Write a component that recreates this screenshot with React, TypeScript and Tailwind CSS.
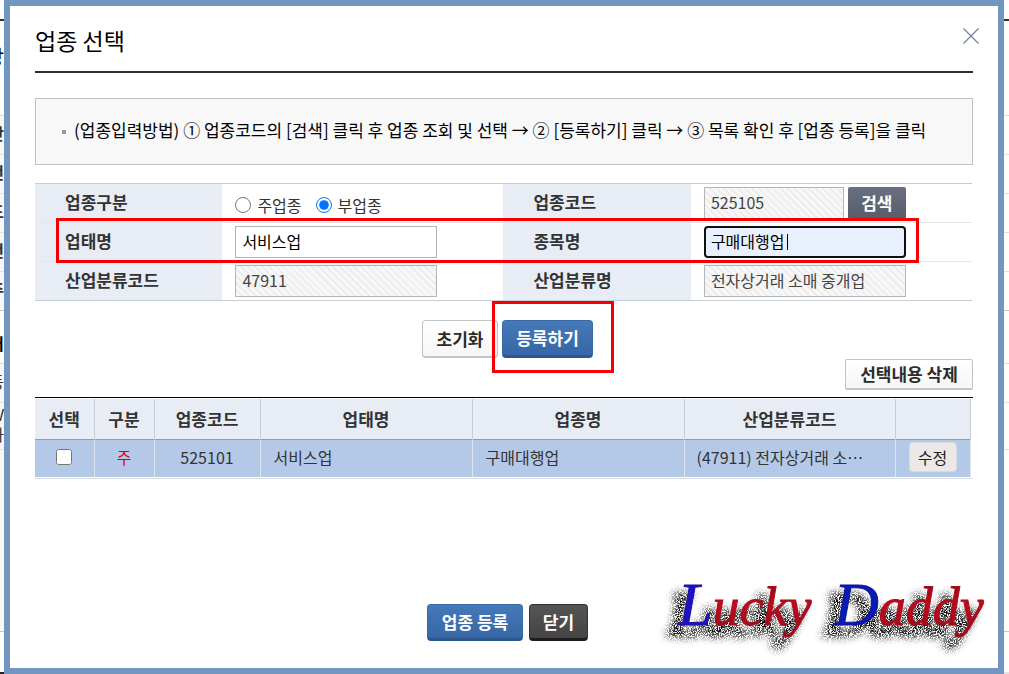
import React, { useState } from 'react';
import clsx from 'clsx';

interface FieldProps {
    id: string;
    label: string;
    children: React.ReactNode;
}

// Rows of the page that stays visible on both sides of the dialog
const PAGE_ROWS = [
    { text: '난', height: 'h-[39px]', line: 'border-[#e2e2e2]' },
    { text: '번', height: 'h-[39px]', line: 'border-[#e2e2e2]' },
    { text: '드', height: 'h-[39px]', line: 'border-[#e2e2e2]' },
    { text: '번', height: 'h-[39px]', line: 'border-[#e2e2e2]' },
    { text: '주', height: 'h-[39px]', line: 'border-[#c6cace]' },
];

const COLUMNS = [
    { name: '선택', width: 'w-[59px]' },
    { name: '구분', width: 'w-[60px]' },
    { name: '업종코드', width: 'w-[106px]' },
    { name: '업태명', width: 'w-[212px]' },
    { name: '업종명', width: 'w-[212px]' },
    { name: '산업분류코드', width: 'w-[211px]' },
    { name: '', width: 'w-[75px]' },
];

const INPUT = 'h-8 border border-[#b5b5b5] px-[6px] pb-[2px] text-base outline-none';
const READONLY =
    'text-[#444] bg-[repeating-linear-gradient(45deg,#f7f7f7_0px,#f7f7f7_3px,#ebebeb_4px,#ebebeb_5px)]';
const LIGHT_BUTTON =
    'border border-b-2 border-[#c4c4c4] bg-linear-to-b from-white to-[#f6f6f6] text-[17px] font-bold text-[#2b2b2b]';
const BLUE_BUTTON =
    'rounded border border-b-[3px] border-[#3a6aa6] border-b-[#2b5790] bg-linear-to-b from-[#4679b9] to-[#3767a4] text-[17px] font-bold text-white';

const Field: React.FC<FieldProps> = ({ id, label, children }) => (
    <>
        <th scope="row" className="w-1/5 bg-[#e8edf5] pb-[2px] pl-[30px] text-left text-[17px] font-bold text-[#333]">
            <label htmlFor={id}>{label}</label>
        </th>
        <td className="w-[30%] py-0 pl-[13px]">{children}</td>
    </>
);

/** The page underneath, mostly covered by the dialog. */
const BackPage: React.FC = () => (
    <div className="absolute inset-0 overflow-hidden bg-white text-base leading-5 text-[#333]" aria-hidden="true">
        <div className="h-[21px] border-b-2 border-[#333]"></div>
        <div className="flex h-[95px] items-center border-b border-[#d5d8dc]">
            <span className="flex w-1 justify-end overflow-hidden pb-5 text-xl text-black">상</span>
        </div>
        {PAGE_ROWS.map((row, i) => (
            <div key={i} className={clsx('flex border-b', row.height, row.line)}>
                <span className="flex w-1 items-center justify-end overflow-hidden bg-[#f8f8f8] font-bold">{row.text}</span>
            </div>
        ))}
        <div className="flex h-[53px] items-end border-b border-[#d5d8dc]">
            <span className="flex w-1 justify-end overflow-hidden pb-2 font-bold text-black">처</span>
        </div>
        <div className="flex h-[39px] border-b border-[#e2e2e2]">
            <span className="flex w-1 items-center justify-end overflow-hidden bg-[#f8f8f8]">등</span>
        </div>
        <div className="flex h-[47px] border-b border-[#e2e2e2]">
            <span className="flex w-1 flex-col items-end justify-center overflow-hidden bg-[#f8f8f8]">
                <span>W</span>
                <span>가</span>
            </span>
        </div>
        <div className="flex h-[182px] border-b border-[#c6cace]">
            <span className="w-1 bg-[#f8f8f8]"></span>
        </div>
        <div className="flex h-[42px] border-b-2 border-[#e4e4e4]">
            <span className="-mb-[2px] w-1 border-b-2 border-[#222]"></span>
        </div>
    </div>
);

/** Signature in the corner, with its sprayed shadow. */
const Signature: React.FC = () => (
    <svg
        className="pointer-events-none absolute right-2 bottom-0 h-[88px] w-[336px]"
        viewBox="0 0 336 88"
        role="img"
        aria-label="Lucky Daddy"
    >
        <defs>
            <filter id="spray" x="-10%" y="-30%" width="120%" height="170%">
                <feMorphology in="SourceAlpha" operator="dilate" radius="1" result="thick" />
                <feGaussianBlur in="thick" stdDeviation="4" result="soft" />
                <feOffset in="soft" dx="-10" dy="10" result="moved" />
                <feTurbulence type="fractalNoise" baseFrequency="0.9" numOctaves="2" seed="4" result="noise" />
                <feColorMatrix in="noise" type="matrix" values="0 0 0 0 0  0 0 0 0 0  0 0 0 0 0  5 0 0 0 -1.9" result="grain" />
                <feComponentTransfer in="moved" result="dense">
                    <feFuncA type="linear" slope="1.3" />
                </feComponentTransfer>
                <feComposite in="dense" in2="grain" operator="in" />
            </filter>
            <linearGradient id="red" x1="0" y1="0" x2="0" y2="1">
                <stop offset="0" stopColor="#6d0a12" />
                <stop offset="0.5" stopColor="#c4081c" />
                <stop offset="1" stopColor="#8d0e1b" />
            </linearGradient>
        </defs>
        {['shadow', 'ink'].map((layer) => (
            <g
                key={layer}
                filter={layer === 'shadow' ? 'url(#spray)' : undefined}
                className="font-['Liberation_Serif',serif] text-[54px] italic"
                fill="url(#red)"
                stroke="#a50d1c"
                strokeWidth="1"
            >
                <text x="24" y="45">
                    <tspan className="fill-[#1f12c4] stroke-[#1a10a0] text-[62px]">L</tspan>ucky
                </text>
                <text x="180" y="45">
                    <tspan className="fill-[#0a1ab4] stroke-[#0a1694] text-[62px]">D</tspan>addy
                </text>
            </g>
        ))}
    </svg>
);

export default function App() {
    const [kind, setKind] = useState('sub');
    const [category, setCategory] = useState('서비스업');
    const [item, setItem] = useState('구매대행업');
    const [checked, setChecked] = useState(false);

    return (
        <div className="relative pr-[5px] pl-1 font-['Liberation_Sans','Noto_Sans_CJK_KR',sans-serif] text-[#333]">
            <BackPage />
            <div
                role="dialog"
                aria-labelledby="dialog-title"
                className="relative flex min-h-screen flex-col border-[6px] border-[#7296c0] bg-white px-[25px] pb-[27px] font-['Noto_Sans_CJK_KR',sans-serif]"
            >
                <header className="flex h-[67px] items-center justify-between border-b-2 border-[#2f332f]">
                    <h1 id="dialog-title" className="pt-[2px] text-[23px] leading-8 text-black">업종 선택</h1>
                    <button type="button" aria-label="창 닫기" className="-mr-[7px] pb-[6px]">
                        <svg className="size-[18px]" viewBox="0 0 18 18" stroke="#747f9f" strokeWidth="1.2">
                            <path d="M1.500 1.500L16.500 16.500M16.500 1.500L1.500 16.500" />
                        </svg>
                    </button>
                </header>

                <div className="mt-[25px] flex min-h-[67px] items-center border border-[#bfbfbf] bg-[#f8f8f8] pr-4 pl-[26px]">
                    <p className="flex items-center gap-2 pb-[3px] text-[17px] leading-6 text-black">
                        <span className="mt-[3px] size-1 shrink-0 bg-[#999]"></span>
                        (업종입력방법) ① 업종코드의 [검색] 클릭 후 업종 조회 및 선택 → ② [등록하기] 클릭 → ③ 목록 확인 후 [업종 등록]을 클릭
                    </p>
                </div>

                <section className="relative mt-[18px] pr-px">
                    <table className="w-full table-fixed border-collapse">
                        <tbody>
                            <tr className="h-[39px] border-y border-t-[#c5cdd6] border-b-[#e3e6ea]">
                                <Field id="kind-sub" label="업종구분">
                                    <div className="flex items-center gap-[14px] pt-1 text-base leading-6">
                                        <label className="flex items-center gap-[6px]">
                                            <input
                                                type="radio"
                                                name="kind"
                                                className="size-4"
                                                checked={kind === 'main'}
                                                onChange={() => setKind('main')}
                                            />
                                            주업종
                                        </label>
                                        <label className="flex items-center gap-[6px]">
                                            <input
                                                id="kind-sub"
                                                type="radio"
                                                name="kind"
                                                className="size-4"
                                                checked={kind === 'sub'}
                                                onChange={() => setKind('sub')}
                                            />
                                            부업종
                                        </label>
                                    </div>
                                </Field>
                                <Field id="code" label="업종코드">
                                    <div className="flex gap-1">
                                        <input id="code" readOnly value="525105" className={clsx(INPUT, READONLY, 'w-[140px]')} />
                                        <button
                                            type="button"
                                            className="h-8 w-[58px] rounded-xs bg-linear-to-b from-[#6a7080] to-[#565c69] text-[17px] font-bold text-white"
                                        >
                                            검색
                                        </button>
                                    </div>
                                </Field>
                            </tr>
                            <tr className="h-[39px] border-b border-[#e3e6ea]">
                                <Field id="category" label="업태명">
                                    <input
                                        id="category"
                                        value={category}
                                        onChange={(e) => setCategory(e.target.value)}
                                        className={clsx(INPUT, 'block w-[202px] text-black')}
                                    />
                                </Field>
                                <Field id="item" label="종목명">
                                    <div className="relative w-[202px]">
                                        <input
                                            id="item"
                                            value={item}
                                            onChange={(e) => setItem(e.target.value)}
                                            className="block h-8 w-full rounded-sm border-2 border-[#101010] bg-[#e8f0fe] px-[5px] pb-[2px] text-base text-black outline-none"
                                        />
                                        {/* Text cursor */}
                                        <span className="absolute top-2 left-[83px] h-4 w-px bg-black"></span>
                                    </div>
                                </Field>
                            </tr>
                            <tr className="h-[39px] border-b border-[#c5cdd6]">
                                <Field id="class-code" label="산업분류코드">
                                    <input id="class-code" readOnly value="47911" className={clsx(INPUT, READONLY, 'block w-[202px]')} />
                                </Field>
                                <Field id="class-name" label="산업분류명">
                                    <input
                                        id="class-name"
                                        readOnly
                                        value="전자상거래 소매 중개업"
                                        className={clsx(INPUT, READONLY, 'block w-[202px]')}
                                    />
                                </Field>
                            </tr>
                        </tbody>
                    </table>
                    {/* Highlight over the second row */}
                    <div className="pointer-events-none absolute top-[35px] right-[54px] left-[21px] h-[45px] border-[3px] border-[#f40000]"></div>
                </section>

                <div className="mt-[19px] flex justify-center gap-1 pl-[7px]">
                    <button type="button" className={clsx(LIGHT_BUTTON, 'h-[38px] w-[76px] rounded')}>초기화</button>
                    <div className="relative">
                        <button type="button" className={clsx(BLUE_BUTTON, 'block h-[38px] w-[91px]')}>등록하기</button>
                        <div className="pointer-events-none absolute -top-[19px] -right-[21px] -bottom-[15px] -left-[10px] border-[3px] border-[#f40000]"></div>
                    </div>
                </div>

                <button type="button" className={clsx(LIGHT_BUTTON, 'mt-px h-[31px] w-32 self-end rounded-xs leading-5')}>
                    선택내용 삭제
                </button>

                <div className="mt-[7px] border-t border-b border-t-black border-b-[#d8dcdc] pt-px pr-1 pb-px">
                    <table className="w-full table-fixed border-collapse">
                        <thead>
                            <tr className="h-10 border-b border-[#979da5] bg-[#e8edf5]">
                                {COLUMNS.map((col, i) => (
                                    <th key={i} scope="col" className={clsx('border-r border-r-[#c5cdd6] text-[17px] font-bold', col.width)}>
                                        {col.name}
                                    </th>
                                ))}
                            </tr>
                        </thead>
                        <tbody>
                            <tr className="h-[38px] bg-[#b4c9e8] text-base [&>td]:border-r [&>td]:border-r-[#dce5f0] [&>td]:pb-[2px]">
                                <td className="text-center">
                                    <input
                                        type="checkbox"
                                        aria-label="525101 선택"
                                        className="mx-auto block size-4"
                                        checked={checked}
                                        onChange={() => setChecked(!checked)}
                                    />
                                </td>
                                <td className="text-center text-[#e00010]">주</td>
                                <td className="text-center">525101</td>
                                <td className="pl-[13px]">서비스업</td>
                                <td className="pl-[13px]">구매대행업</td>
                                <td className="truncate px-3">(47911) 전자상거래 소⋯</td>
                                <td>
                                    <button
                                        type="button"
                                        className="mx-auto block h-[30px] w-12 rounded-sm border border-[#d9d9de] bg-[#ebe9e8] text-base text-[#222]"
                                    >
                                        수정
                                    </button>
                                </td>
                            </tr>
                        </tbody>
                    </table>
                </div>

                <footer className="mt-auto flex justify-center gap-[6px] pl-[7px]">
                    <button type="button" className={clsx(BLUE_BUTTON, 'h-[37px] w-24')}>업종 등록</button>
                    <button
                        type="button"
                        className="h-[37px] w-[59px] rounded-sm border border-b-[3px] border-[#333] border-b-[#1c1c1c] bg-linear-to-b from-[#555] to-[#444] text-[17px] font-bold text-white"
                    >
                        닫기
                    </button>
                </footer>

                <Signature />
            </div>
        </div>
    );
}
